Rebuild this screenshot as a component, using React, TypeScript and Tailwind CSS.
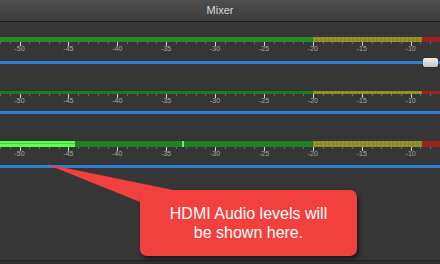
import React from "react";

const X0 = 19.5;
const STEP = 9.78; // px per dB

function dbX(db: number) {
  return X0 + (db + 50) * STEP;
}

function Scale({ h }: { h: number }) {
  const ticks: React.ReactNode[] = [];
  for (let db = -52; db <= -8; db++) {
    const x = Math.round(dbX(db)) + 0.5;
    const major = db % 5 === 0;
    ticks.push(
      <line
        key={"t" + db}
        x1={x}
        x2={x}
        y1={0}
        y2={major ? 4 : 2}
        stroke={major ? "#d0d0d0" : "#6a6a6a"}
        strokeWidth={1}
      />
    );
    if (major && db >= -50 && db <= -10) {
      ticks.push(
        <text
          key={"l" + db}
          x={dbX(db)}
          y={9}
          textAnchor="middle"
          fontSize={7}
          fill="#a8a8a8"
          fontFamily="'Liberation Sans', Arial, sans-serif"
        >
          {db}
        </text>
      );
    }
  }
  return (
    <svg width={440} height={h} className="block">
      {ticks}
    </svg>
  );
}

function MeterBar({ h, green }: { h: string; green: string }) {
  return (
    <div className={`flex w-full ${h}`}>
      <div className={`w-[313px] ${green}`} />
      <div className="w-[109px] bg-[#8c8a22] bg-[radial-gradient(#a8a233_0.6px,transparent_0.7px)] bg-[length:4px_3px]" />
      <div className="flex-1 bg-[#9a2222]" />
    </div>
  );
}

export default function App() {
  return (
    <div className="relative h-[264px] w-[440px] overflow-hidden bg-[#363636] font-['Liberation_Sans',Arial,sans-serif]">
      {/* header */}
      <div className="flex h-[22px] items-start justify-center border-b border-[#1c1c1c] bg-gradient-to-b from-[#4e4e4e] via-[#464646] to-[#3c3c3c] pt-[4px] text-[11px] leading-[12px] text-[#d8d8d8]">
        Mixer
      </div>

      {/* meter 1 */}
      <div className="mt-[15px]">
        <MeterBar h="h-[5px]" green="bg-[#268c28]" />
        <Scale h={19} />
        <div className="relative h-[3px] bg-[#2d7dd2]">
          <div className="absolute left-[423px] top-[-3px] h-[9px] w-[15px] rounded-[2px] bg-gradient-to-b from-[#f0f0f0] to-[#c4c4c4] shadow-[0_0_1px_#000]" />
        </div>
      </div>

      {/* meter 2 */}
      <div className="mt-[27px]">
        <MeterBar h="h-[3px]" green="bg-[#207c22]" />
        <Scale h={17} />
        <div className="h-[3px] bg-[#2d7dd2]" />
      </div>

      {/* meter 3 */}
      <div className="mt-[27px]">
        <div className="relative">
          <MeterBar h="h-[6px]" green="bg-[#227f24]" />
          <div className="absolute left-0 top-0 flex h-[6px] w-[75px] flex-col">
            <div className="h-[2px] bg-[#5cff4c]" />
            <div className="h-[1px] bg-[#3fd63a]" />
            <div className="h-[3px] bg-[#5cff4c]" />
          </div>
          <div className="absolute left-[182px] top-0 h-[6px] w-[2px] bg-[#5cff4c]" />
        </div>
        <Scale h={18} />
        <div className="h-[3px] bg-[#2d7dd2]" />
      </div>

      {/* bottom edge */}
      <div className="absolute bottom-0 left-0 h-[4px] w-full border-t border-[#222] bg-[#2e2e2e]" />

      {/* callout */}
      <svg className="absolute left-0 top-0" width={440} height={264}>
        <polygon points="46,164 178,191 140,202" fill="#f2403f" />
      </svg>
      <div className="absolute left-[140px] top-[190px] flex h-[66px] w-[217px] flex-col items-center justify-center rounded-[7px] bg-[#f2403f] text-center text-[16px] leading-[19px] text-white shadow-[2px_3px_4px_rgba(0,0,0,0.55)]">
        <div>HDMI Audio levels will</div>
        <div>be shown here.</div>
      </div>
    </div>
  );
}
